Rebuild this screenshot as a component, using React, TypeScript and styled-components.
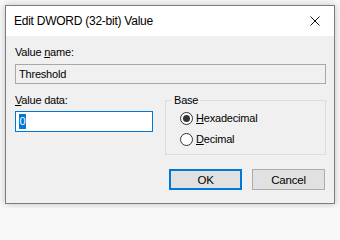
import styled, { createGlobalStyle } from "styled-components";

const Global = createGlobalStyle`
  html, body {
    margin: 0;
    padding: 0;
    height: 208px;
    overflow: hidden;
    background: #f8f8f8;
  }
  body {
    font-family: "Liberation Sans", Arial, sans-serif;
    font-size: 11px;
    letter-spacing: -0.2px;
    color: #000;
  }
`;

const Page = styled.div`
  width: 340px;
  height: 208px;
  padding: 5px 0 0 5px;
  box-sizing: border-box;
`;

const Window = styled.div`
  width: 330px;
  height: 199px;
  box-sizing: border-box;
  border: 1px solid #7d7d7d;
  background: #f0f0f0;
  box-shadow: 0 0 7px rgba(0, 0, 0, 0.22);
  display: flex;
  flex-direction: column;
`;

const TitleBar = styled.div`
  height: 30px;
  flex: none;
  background: #fff;
  display: flex;
  align-items: center;
  padding: 0 9px 0 8px;
  font-size: 12px;
  letter-spacing: -0.25px;
`;

const Title = styled.span`
  flex: 1;
`;

const Close = styled.span`
  width: 10px;
  height: 10px;
  display: flex;
  margin-right: 5px;
`;

const Body = styled.div`
  flex: 1;
  padding: 9px 8px 0 9px;
  display: flex;
  flex-direction: column;
`;

const Label = styled.div`
  line-height: 15px;
  height: 15px;
`;

const Field = styled.div<{ $active?: boolean }>`
  box-sizing: border-box;
  height: ${({ $active }) => ($active ? 21 : 20)}px;
  border: 1px solid ${({ $active }) => ($active ? "#0078d7" : "#a8a8a8")};
  background: ${({ $active }) => ($active ? "#fff" : "#f0f0f0")};
  display: flex;
  align-items: center;
  padding: 0 3px;
  margin-top: ${({ $active }) => ($active ? 3 : 4)}px;
`;

const Selected = styled.span`
  background: #0078d7;
  color: #fff;
  line-height: 15px;
  padding: 0 0.5px;
`;

const Row = styled.div`
  display: grid;
  grid-template-columns: 138px 161px;
  column-gap: 12px;
  margin-top: 9px;
`;

const Column = styled.div`
  display: flex;
  flex-direction: column;
`;

const Group = styled.div`
  position: relative;
  margin-top: 7px;
  height: 55px;
  box-sizing: border-box;
  border: 1px solid #dcdcdc;
  padding: 11px 0 0 14px;
  display: flex;
  flex-direction: column;
  gap: 8px;
`;

const Legend = styled.span`
  position: absolute;
  top: -8px;
  left: 6px;
  padding: 0 2px;
  line-height: 15px;
  background: #f0f0f0;
`;

const Radio = styled.label`
  display: flex;
  align-items: center;
  gap: 3px;
  height: 13px;
  line-height: 13px;
`;

const Dot = styled.span<{ $checked?: boolean }>`
  width: 13px;
  height: 13px;
  box-sizing: border-box;
  border: 1px solid #333;
  border-radius: 50%;
  background: #fff;
  display: flex;
  align-items: center;
  justify-content: center;
  &::after {
    content: "";
    width: 7px;
    height: 7px;
    border-radius: 50%;
    background: ${({ $checked }) => ($checked ? "#333" : "transparent")};
  }
`;

const Buttons = styled.div`
  display: flex;
  justify-content: flex-end;
  gap: 10px;
  margin-top: 14px;
  padding-right: 1px;
`;

const Button = styled.button<{ $default?: boolean }>`
  width: 73px;
  height: 21px;
  box-sizing: border-box;
  border: ${({ $default }) => ($default ? "2px solid #0078d7" : "1px solid #adadad")};
  background: #e1e1e1;
  font: inherit;
  font-size: 11.5px;
  letter-spacing: inherit;
  color: #000;
  padding: 0;
`;

export default function App() {
  return (
    <Page>
      <Global />
      <Window>
        <TitleBar>
          <Title>Edit DWORD (32-bit) Value</Title>
          <Close>
            <svg width="10" height="10" viewBox="0 0 10 10">
              <path d="M0.5 0.5 L9.5 9.5 M9.5 0.5 L0.5 9.5" stroke="#111" strokeWidth="1" />
            </svg>
          </Close>
        </TitleBar>
        <Body>
          <Label>
            Value <u>n</u>ame:
          </Label>
          <Field>Threshold</Field>
          <Row>
            <Column>
              <Label>
                <u>V</u>alue data:
              </Label>
              <Field $active>
                <Selected>0</Selected>
              </Field>
            </Column>
            <Group>
              <Legend>Base</Legend>
              <Radio>
                <Dot $checked />
                <span>
                  <u>H</u>exadecimal
                </span>
              </Radio>
              <Radio>
                <Dot />
                <span>
                  <u>D</u>ecimal
                </span>
              </Radio>
            </Group>
          </Row>
          <Buttons>
            <Button $default>OK</Button>
            <Button>Cancel</Button>
          </Buttons>
        </Body>
      </Window>
    </Page>
  );
}
